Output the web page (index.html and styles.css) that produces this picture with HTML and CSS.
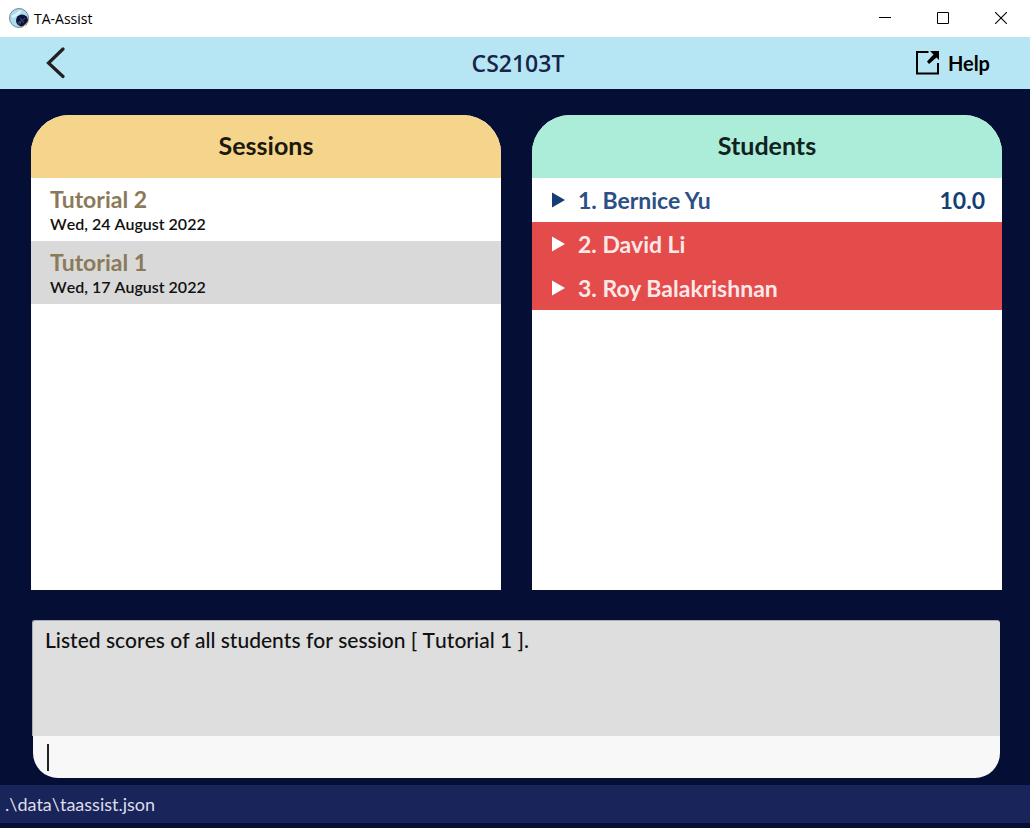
FILE: index.html
```html
<!DOCTYPE html>
<html lang="en">
<head>
<meta charset="utf-8">
<title>TA-Assist</title>
<link rel="stylesheet" href="styles.css">
</head>
<body class="window">
<div class="titlebar">
  <svg class="app-icon" width="20" height="20" viewBox="0 0 20 20" aria-hidden="true">
    <circle cx="10" cy="10" r="9.500" fill="#a9dcee" stroke="#6f8791"/>
    <path d="M4 8.500l3-1.500 4-3.500" fill="none" stroke="#e4f1f5" stroke-width="2.600" stroke-linecap="round"/>
    <circle cx="13" cy="12.500" r="6" fill="#0b1238"/>
    <path d="M12 19.500a9.500 9.500 0 0 0 7.500-7l-2.500 3-3 2.500z" fill="#e6bf7c"/>
    <path d="M10 15l6-5M11 10l4 5" stroke="#46527e" fill="none"/>
    <circle cx="10.500" cy="15" r="1.300" fill="none" stroke="#46527e" stroke-width=".8"/>
  </svg>
  <span class="app-name">TA-Assist</span>
  <button class="window-button" aria-label="Minimize"><svg width="12" height="12" viewBox="0 0 12 12"><path d="M0 5.500h12" stroke="#000"/></svg></button>
  <button class="window-button" aria-label="Maximize"><svg width="12" height="12" viewBox="0 0 12 12"><path d="M.5.5h11v11H.5z" fill="none" stroke="#000"/></svg></button>
  <button class="window-button" aria-label="Close"><svg width="12" height="12" viewBox="0 0 12 12"><path d="M0 0l12 12M12 0L0 12" stroke="#000" stroke-width="1.100"/></svg></button>
</div>
<header class="header">
  <button class="back" aria-label="Back"><svg width="20" height="32" viewBox="0 0 20 32"><path d="M17 2L2.500 16L17 29.500" fill="none" stroke="#231f20" stroke-width="3.200" stroke-linecap="round"/></svg></button>
  <h1 class="module">CS2103T</h1>
  <button class="help"><svg width="24" height="24" viewBox="0 0 24 24" aria-hidden="true"><path d="M12.500 1H1v21.500h21V12" fill="none" stroke="#000" stroke-width="2"/><path d="M14 0h9v9l-2.500-2.500-7.500 6.500-2-2.500 6.500-7z"/></svg>Help</button>
</header>
<main class="content">
  <div class="panels">
    <section class="panel">
      <h2 class="panel-title sessions-title">Sessions</h2>
      <ul class="list">
        <li class="session"><span class="session-name">Tutorial 2</span><time class="session-date" datetime="2022-08-24">Wed, 24 August 2022</time></li>
        <li class="session session-alt"><span class="session-name">Tutorial 1</span><time class="session-date" datetime="2022-08-17">Wed, 17 August 2022</time></li>
      </ul>
    </section>
    <section class="panel">
      <h2 class="panel-title students-title">Students</h2>
      <ul class="list">
        <li><button class="student"><svg class="arrow" width="13" height="16" viewBox="0 0 13 16" aria-hidden="true"><path d="M0 0.500L13 8L0 15.500z"/></svg><span class="student-name">1. Bernice Yu</span><span class="score">10.0</span></button></li>
        <li><button class="student ungraded"><svg class="arrow" width="13" height="16" viewBox="0 0 13 16" aria-hidden="true"><path d="M0 0.500L13 8L0 15.500z"/></svg><span class="student-name">2. David Li</span></button></li>
        <li><button class="student ungraded"><svg class="arrow" width="13" height="16" viewBox="0 0 13 16" aria-hidden="true"><path d="M0 0.500L13 8L0 15.500z"/></svg><span class="student-name">3. Roy Balakrishnan</span></button></li>
      </ul>
    </section>
  </div>
  <div class="console">
    <output class="result">Listed scores of all students for session [ Tutorial 1 ].</output>
    <div class="command"><span class="caret"></span><input class="command-input" type="text" aria-label="Command"></div>
  </div>
</main>
<footer class="status">.\data\taassist.json</footer>
</body>
</html>
```
FILE: styles.css
```css
* { box-sizing: border-box; }

button {
  border: 0;
  padding: 0;
  background: none;
  color: inherit;
  font: inherit;
}

.window {
  display: flex;
  flex-direction: column;
  min-height: 100vh;
  margin: 0;
  padding-bottom: 5px;
  background: #050e34;
  font-family: Lato, sans-serif;
  color: #111;
}

.titlebar {
  display: flex;
  align-items: center;
  height: 37px;
  padding: 0 0 1px 9px;
  background: #fff;
  color: #000;
}

.app-name {
  flex: 1;
  padding-left: 5px;
  font: 14px "Open Sans", sans-serif;
  font-kerning: none;
}

.window-button {
  display: flex;
  align-items: center;
  justify-content: center;
  width: 58px;
  height: 36px;
}

.header {
  display: grid;
  grid-template-columns: 1fr auto 1fr;
  align-items: center;
  height: 52px;
  padding: 0 40px 0 46px;
  background: #b6e6f4;
}

.back {
  display: flex;
  justify-self: start;
}

.module {
  margin: 0;
  font: 600 23px "Open Sans", sans-serif;
  color: #182448;
}

.help {
  display: flex;
  align-items: center;
  justify-self: end;
  gap: 8px;
  color: #000;
  font-size: 20px;
  font-weight: 700;
}

.content {
  display: flex;
  flex: 1;
  flex-direction: column;
  gap: 30px;
  padding: 26px 28px 7px 31px;
}

.panels {
  display: grid;
  flex: 1;
  grid-template-columns: 1fr 1fr;
  gap: 31px;
}

.panel {
  overflow: hidden;
  border-radius: 38px 38px 0 0;
  background: #fff;
}

.panel-title {
  margin: 0;
  padding-bottom: 2px;
  font-size: 25px;
  font-weight: 700;
  line-height: 61px;
  text-align: center;
}

.sessions-title { background: #f5d48c; color: #1b190e; }
.students-title { background: #acedda; color: #11211c; }

.list {
  margin: 0;
  padding: 0;
  list-style: none;
}

.session {
  display: flex;
  flex-direction: column;
  height: 63px;
  padding: 7px 19px;
}

.session-alt { background: #d9d9d9; }

.session-name {
  color: #8b7a58;
  font-size: 23px;
  font-weight: 700;
  line-height: 28px;
}

.session-date {
  font-size: 16px;
  font-weight: 600;
  font-kerning: none;
  line-height: 22px;
}

.student {
  display: flex;
  align-items: center;
  width: 100%;
  height: 44px;
  padding: 0 17px 0 20px;
  gap: 13px;
  color: #2b5083;
  font-size: 23px;
  font-weight: 700;
  text-align: left;
}

.arrow { fill: #153f74; }
.student-name { flex: 1; }
.score { color: #153f74; }

.ungraded {
  background: #e44b4b;
  color: #fde8e8;
}

.ungraded .arrow { fill: #fff; }

.console { padding: 0 2px 0 1px; }

.result {
  display: block;
  height: 116px;
  padding: 5px 12px;
  border-top: 1px solid #a9abb5;
  border-left: 1px solid #a9abb5;
  border-radius: 3px 3px 0 0;
  background: #dedede;
  font-size: 21px;
  font-weight: 500;
  font-kerning: none;
  line-height: 28px;
}

.command {
  display: flex;
  align-items: center;
  height: 42px;
  margin-left: 1px;
  padding: 0 14px;
  border-radius: 0 0 25px 25px;
  background: #f8f8f8;
}

.caret {
  width: 2px;
  height: 27px;
  background: #222;
}

.command-input {
  flex: 1;
  border: 0;
  outline: 0;
  background: none;
  font: 21px Lato, sans-serif;
}

.status {
  height: 38px;
  padding-left: 5px;
  background: #18245a;
  color: #dcdee6;
  font-size: 18px;
  font-kerning: none;
  line-height: 38px;
}
```
